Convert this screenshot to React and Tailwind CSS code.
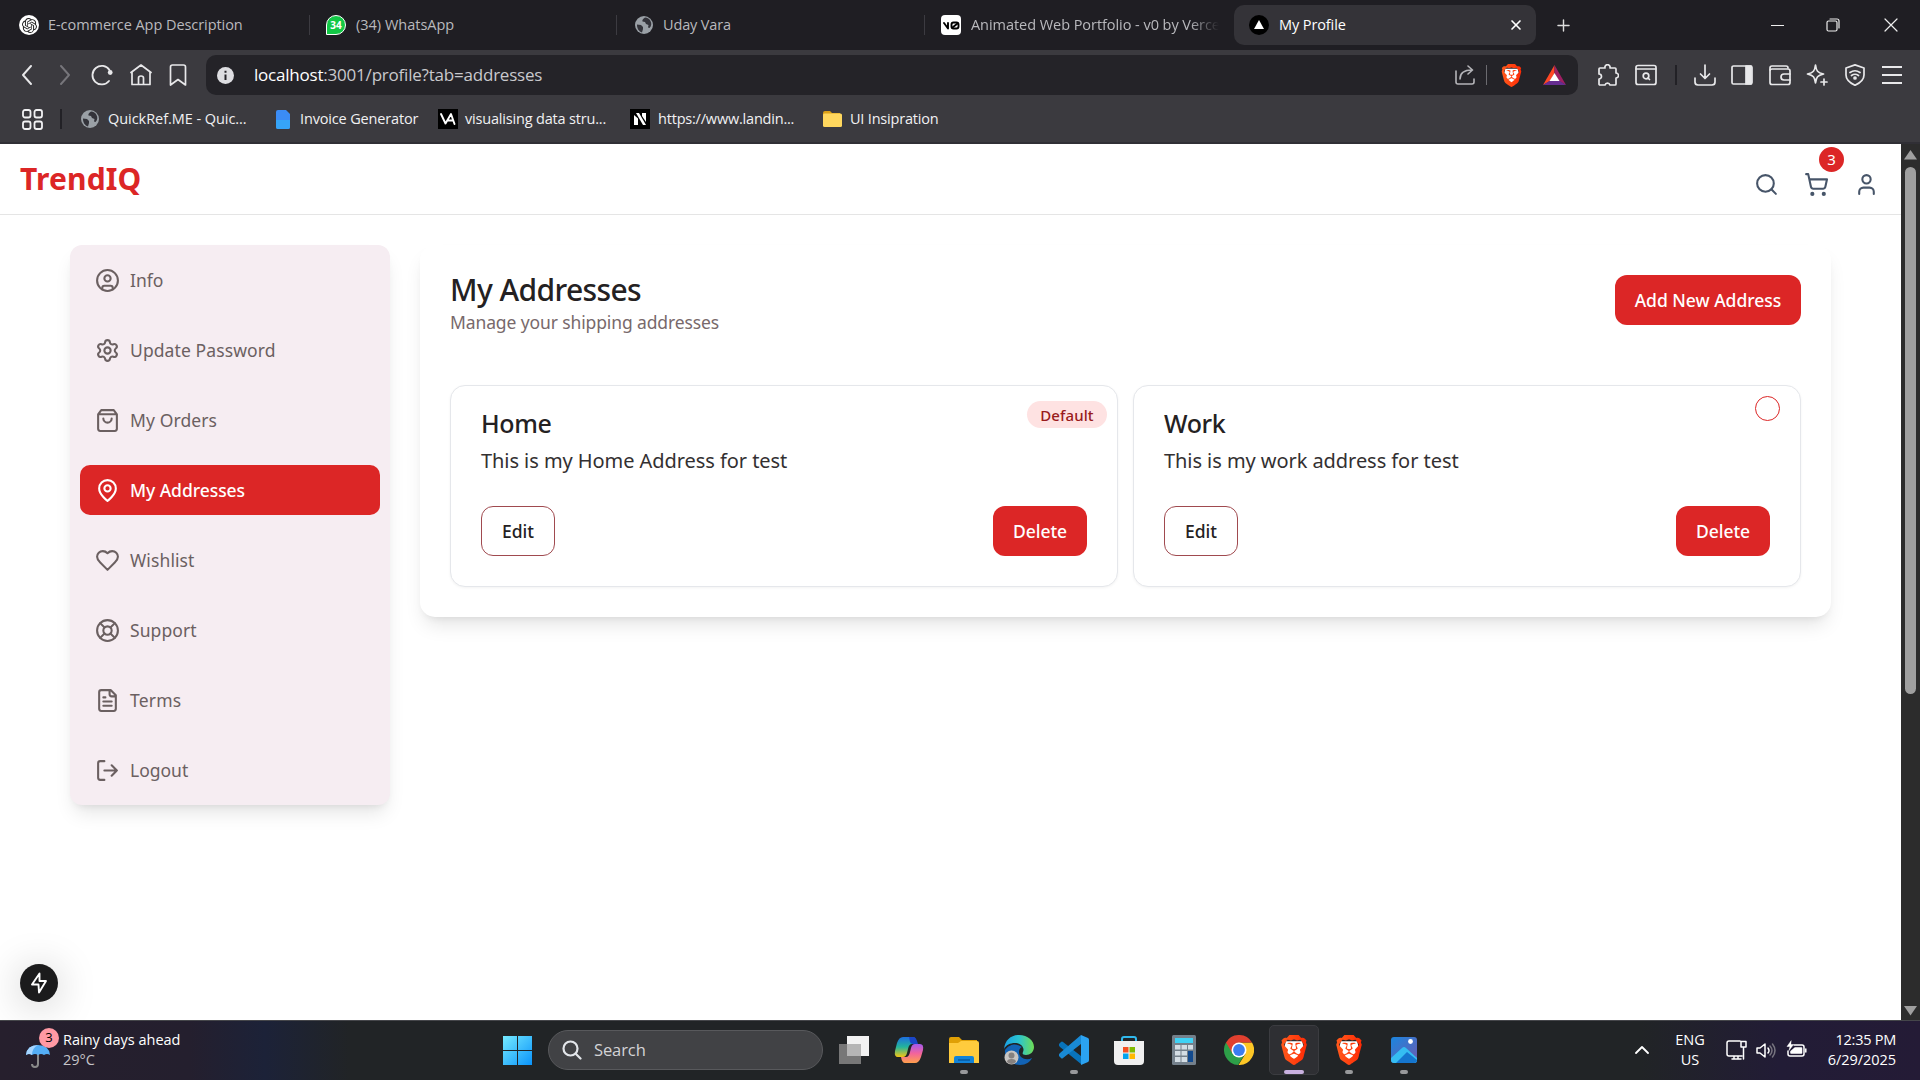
import React from "react";
import { Settings, LifeBuoy, CircleUser, ShoppingCart, Search, User, X, Plus } from "lucide-react";
import { SiBrave, SiOpenai } from "react-icons/si";

const UI = "font-['Open_Sans',sans-serif]";

function Svg({ size = 24, box = 24, w = 2, children, className = "" }) {
  return (
    <svg width={size} height={size} viewBox={`0 0 ${box} ${box}`} fill="none" stroke="currentColor" strokeWidth={w} strokeLinecap="round" strokeLinejoin="round" className={"shrink-0 " + className}>
      {children}
    </svg>
  );
}

function Globe() {
  return (
    <svg width="18" height="18" viewBox="0 0 18 18" className="shrink-0">
      <circle cx="9" cy="9" r="9" fill="#9aa0a6" />
      <path d="M2 8.5 6 9l2 2v2l-1 3.4C4 15.600 1.800 12.500 2 8.500ZM10 1.600C8 3 7 4 7.500 5.500L10 6l1 2 2.500 1-.5 2.500 1.500.5c2-2 2.300-4.500 1-7C14.500 3 12.500 1.800 10 1.600Z" fill="#33333a" />
    </svg>
  );
}

function Brave({ size, id }) {
  return (
    <svg width={size} height={size} viewBox="0 0 24 24" className="shrink-0">
      <defs>
        <linearGradient id={id} x2="1">
          <stop offset="0" stopColor="#ff5a1c" />
          <stop offset="1" stopColor="#ff2a05" />
        </linearGradient>
      </defs>
      <path d="M5.500 5h13l1 4-2 7-5.500 5-5.500-5-2-7Z" fill="#fff" />
      <SiBrave size={24} style={{ fill: `url(#${id})` }} />
    </svg>
  );
}

function TabLabel({ children, className }) {
  return <span className={"whitespace-nowrap text-[14.5px] leading-5 " + className}>{children}</span>;
}

function TabStrip() {
  return (
    <div className="flex h-[50px] items-center bg-[#1f1e23] text-[#b9b9bd]">
      <div className="flex h-5 w-[310px] items-center border-r border-[#3c3b41] pl-[19px]">
        <span className="flex size-5 items-center justify-center rounded-full bg-white text-[#222]"><SiOpenai size={15} /></span>
        <TabLabel className="ml-[9px] tracking-[-0.06px]">E-commerce App Description</TabLabel>
      </div>
      <div className="flex h-5 w-[307px] items-center border-r border-[#3c3b41] pl-4">
        <span className="flex size-5 items-center justify-center rounded-full rounded-bl-none border border-white bg-[#13c846] text-[10px] font-bold text-white">34</span>
        <TabLabel className="ml-[10px]">(34) WhatsApp</TabLabel>
      </div>
      <div className="flex h-5 w-[308px] items-center border-r border-[#3c3b41] pl-[18px]">
        <Globe />
        <TabLabel className="ml-[10px] tracking-[-0.15px]">Uday Vara</TabLabel>
      </div>
      <div className="flex h-5 w-[309px] items-center pl-4">
        <span className="flex size-5 shrink-0 items-center justify-center rounded bg-white text-black">
          <Svg size={17} box={17} w={1.900}><path d="m1 6 4 5.500V6" /><rect x="8.500" y="5.500" width="7" height="6" rx="2" /><path d="m9.500 10.500 5-4" /></Svg>
        </span>
        <div className="ml-[10px] flex w-[248px] overflow-hidden [mask-image:linear-gradient(to_right,black_88%,transparent)]">
          <TabLabel className="tracking-[-0.05px]">Animated Web Portfolio - v0 by Vercel</TabLabel>
        </div>
      </div>
      <div className="flex h-10 w-[302px] items-center rounded-[10px] bg-[#343338] pl-[15px] pr-3 text-white">
        <svg width="20" height="20" viewBox="0 0 20 20"><circle cx="10" cy="10" r="10" fill="#000" /><path d="m10 5 5 9H5Z" fill="#fff" /></svg>
        <TabLabel className="ml-2.5 tracking-[-0.1px]">My Profile</TabLabel>
        <X size={16} strokeWidth={2.500} className="ml-auto" />
      </div>
      <Plus size={19} strokeWidth={1.800} className="ml-[18px] text-[#ddd]" />
      <div className="ml-auto flex h-full text-[#eee]">
        <div className="flex w-[56px] items-center justify-center"><span className="h-px w-[13px] bg-current" /></div>
        <div className="flex w-[56px] items-center justify-center"><Svg size={14} box={14} w={1.200}><rect x="1" y="3" width="10" height="10" rx="1.500" /><path d="M4 1h7q2 0 2 2v7" /></Svg></div>
        <div className="flex w-[59px] items-center justify-center"><Svg size={14} box={14} w={1.200}><path d="m1 1 12 12M13 1 1 13" /></Svg></div>
      </div>
    </div>
  );
}

function Slot({ w, children, className = "" }) {
  return <div style={{ width: w }} className={"flex shrink-0 items-center justify-center " + className}>{children}</div>;
}

function Toolbar() {
  return (
    <div className="flex h-[50px] items-center bg-[#3b3a3f] text-[#e8e8ea]">
      <Slot w={54}><Svg size={20} box={20} w={1.900}><path d="m14 1-8 9 8 9" /></Svg></Slot>
      <Slot w={22} className="text-[#77767b]"><Svg size={20} box={20} w={1.900}><path d="m6 1 8 9-8 9" /></Svg></Slot>
      <Slot w={52}><Svg size={22} box={22} w={1.800}><path d="M18 17a9.300 9.300 0 1 1 .5-11" /><circle cx="19.200" cy="8.500" r="2.400" fill="currentColor" stroke="none" /></Svg></Slot>
      <Slot w={25}><Svg size={22} box={22} w={1.700}><path d="m1 8.500 10-7.500 10 7.500M2 8v12.500h18V8M8.500 20v-6q0-2 2.500-2t2.500 2v6" /></Svg></Slot>
      <Slot w={49}><Svg size={22} box={22} w={1.700}><path d="M3.500 3q0-2 2-2h11q2 0 2 2v18L11 15.500 3.500 21Z" /></Svg></Slot>
      <div className="ml-1 flex h-10 w-[1372px] items-center rounded-[10px] bg-[#242328]">
        <svg width="17" height="17" viewBox="0 0 17 17" className="ml-[11px]"><circle cx="8.500" cy="8.500" r="8.500" fill="#dedee2" /><path d="M8.500 3.800v2M8.500 7.500v5.500" stroke="#242328" strokeWidth="2" /></svg>
        <span className="ml-[20px] whitespace-nowrap text-[17px] leading-6 tracking-[-0.21px] text-[#c9c9cd]"><span className="text-white">localhost</span>:3001/profile?tab=addresses</span>
        <div className="ml-auto flex items-center">
          <Slot w={42} className="text-[#b4b4b8]"><Svg size={20} box={20} w={1.600}><path d="M1 6v11q0 2 2 2h14q2 0 2-2v-3M5 14c0-6 4-9 12-9M13 1l4.500 4-4.500 4" /></Svg></Slot>
          <span className="h-5 w-px bg-[#6c6b70]" />
          <Slot w={48}><Brave size={23} id="bv0" /></Slot>
          <Slot w={38}><svg width="23" height="20" viewBox="0 0 23 20"><path d="M11.500 0 0 20l7-4 4.500-8Z" fill="#ff4724" /><path d="M11.500 0 23 20l-7-4-4.500-8Z" fill="#9e1f63" /><path d="M0 20h23l-7-4.500H7Z" fill="#662d91" /><path d="M11.500 8 16.500 16h-10Z" fill="#fff" /></svg></Slot>
          <span className="w-[5px]" />
        </div>
      </div>
      <Slot w={60}><Svg size={22} box={22} w={1.700}><path d="M2 5q0-1 1-1h5a2.600 2.600 0 1 1 5 0h5q1 0 1 1v4a2.500 2.500 0 1 1 0 5v6q0 1-1 1h-5a2.600 2.600 0 0 0-5 0H3q-1 0-1-1v-5a2.500 2.500 0 1 0 0-5Z" /></Svg></Slot>
      <Slot w={16}><Svg size={22} box={22} w={1.700}><rect x="1" y="1.500" width="20" height="19" rx="2" /><path d="M1 5h20M14.500 15.500l-1.500-1.500" /><circle cx="11" cy="12" r="2.800" /></Svg></Slot>
      <Slot w={43}><span className="h-5 w-[2px] bg-[#222126]" /></Slot>
      <Slot w={16}><Svg size={22} box={22} w={1.700}><path d="M11 1v13M6.500 10l4.500 4.500 4.500-4.500M1 14v4q0 3 3 3h14q3 0 3-3v-4" /></Svg></Slot>
      <Slot w={58}><Svg size={22} box={22} w={1.700}><rect x="1" y="2" width="20" height="18" rx="1.500" /><path d="M15 2h5v18h-5Z" fill="currentColor" /></Svg></Slot>
      <Slot w={18}><Svg size={22} box={22} w={1.700}><rect x="1" y="5" width="20" height="15.500" rx="2" /><path d="M1 6V4q0-2 2-2h14q2 0 2 2M21 10h-6q-3 0-3 3t3 3h6" /></Svg></Slot>
      <Slot w={56}><Svg size={22} box={22} w={1.700}><path d="M9.500 1c.8 6 2 7.500 8 9-6 1.500-7.200 3-8 9-.8-6-2-7.500-8-9 6-1.500 7.200-3 8-9ZM18 15v6M15 18h6" /></Svg></Slot>
      <Slot w={19}><Svg size={22} box={22} w={1.700}><path d="M11 .9 20 4v7c0 5-4 8-9 10.300C6 19 2 16 2 11V4ZM6 8.500q5-3.500 10 0M7.500 11.500q3.500-2.500 7 0" /><circle cx="11" cy="14" r="1" fill="currentColor" /></Svg></Slot>
      <Slot w={56}><Svg size={20} box={20} w={1.900}><path d="M0 2h20M0 10h20M0 18h20" /></Svg></Slot>
    </div>
  );
}

function Mark({ icon, label, className, text }) {
  return (
    <div className={"flex shrink-0 items-center " + className}>
      {icon}
      <span className={"whitespace-nowrap text-[14.500px] leading-5 " + text}>{label}</span>
    </div>
  );
}

function Bookmarks() {
  return (
    <div className="flex h-[44px] items-center border-b-2 border-[#302f35] bg-[#3b3a3f] pb-1 pl-[22px] text-[#f1f1f3]">
      <Svg size={21} box={21} w={1.800}><rect x="1" y="1" width="7.500" height="7.500" rx="2" /><rect x="12.500" y="1" width="7.500" height="7.500" rx="2" /><rect x="1" y="12.500" width="7.500" height="7.500" rx="2" /><rect x="12.500" y="12.500" width="7.500" height="7.500" rx="2" /></Svg>
      <span className="ml-[17px] h-5 w-[2px] bg-[#222126]" />
      <Mark className="ml-[19px] w-[195px]" icon={<Globe />} text="ml-[9px] tracking-[-0.05px]" label="QuickRef.ME - Quic..." />
      <Mark className="w-[162px]" text="ml-[10px] tracking-[-0.15px]" label="Invoice Generator" icon={<svg width="14" height="19" viewBox="0 0 14 19"><path d="M2 0h8l4 4v13q0 2-2 2H2q-2 0-2-2V2q0-2 2-2Z" fill="#3b8cf6" /><path d="M0 10h14v7q0 2-2 2H2q-2 0-2-2Z" fill="#36a4f7" /></svg>} />
      <Mark className="w-[192px]" text="ml-[7px] tracking-[-0.18px]" label="visualising data stru..." icon={<span className="flex size-5 items-center justify-center bg-black"><Svg size={16} box={16} w={1.900} className="text-white"><path d="m1 3 4.500 9.500L11 3l3.500 10M8 9.500h5" /></Svg></span>} />
      <Mark className="w-[193px]" text="ml-[8px] tracking-[-0.2px]" label="https://www.landin..." icon={<svg width="20" height="20" viewBox="0 0 20 20"><path d="M0 0h20v20H0Z" fill="#000" /><path d="M4 16V6l4 3.500V16ZM6 4h3l7 12h-3ZM12 4h4v9l-4-6Z" fill="#fff" /></svg>} />
      <Mark text="ml-[8px] tracking-[-0.2px]" label="UI Insipration" icon={<svg width="19" height="16" viewBox="0 0 19 16"><path d="M0 2q0-2 2-2h5l2 2h8v5H0Z" fill="#dba017" /><rect y="2.500" width="19" height="13.500" rx="1.500" fill="#ffd75e" /></svg>} />
    </div>
  );
}

const MENU = [
  ["Info", "", <CircleUser size={25} />],
  ["Update Password", "tracking-[0.1px]", <Settings size={25} />],
  ["My Orders", "tracking-[0.1px]", <Svg size={25}><path d="M6 2 3 6v14a2 2 0 0 0 2 2h14a2 2 0 0 0 2-2V6l-3-4ZM3 6h18M16 10a4 4 0 0 1-8 0" /></Svg>],
  ["My Addresses", "tracking-[-0.05px]", <Svg size={25}><path d="M20 10c0 6-8 12-8 12s-8-6-8-12a8 8 0 0 1 16 0Z" /><circle cx="12" cy="10" r="3" /></Svg>],
  ["Wishlist", "tracking-[0.1px]", <Svg size={25}><path d="M19 14c1.490-1.460 3-3.210 3-5.500A5.500 5.500 0 0 0 16.500 3c-1.760 0-3 .5-4.500 2-1.500-1.500-2.740-2-4.500-2A5.500 5.500 0 0 0 2 8.500c0 2.300 1.500 4.050 3 5.500l7 7Z" /></Svg>],
  ["Support", "tracking-[0.1px]", <LifeBuoy size={25} />],
  ["Terms", "tracking-[0.2px]", <Svg size={25}><path d="M15 2H6a2 2 0 0 0-2 2v16a2 2 0 0 0 2 2h12a2 2 0 0 0 2-2V7ZM14 2v4a2 2 0 0 0 2 2h4M10 9H8M16 13H8M16 17H8" /></Svg>],
  ["Logout", "", <Svg size={25}><path d="M9 21H5a2 2 0 0 1-2-2V5a2 2 0 0 1 2-2h4M16 17l5-5-5-5M21 12H9" /></Svg>],
];

function Sidebar() {
  return (
    <nav className="flex w-[320px] shrink-0 flex-col gap-5 rounded-[12px] bg-[#f6edf2] p-[10px] shadow-[0_12px_19px_-4px_rgba(0,0,0,0.1),0_5px_8px_-5px_rgba(0,0,0,0.1)]">
      {MENU.map(([label, spacing, icon]) => {
        const active = label === "My Addresses";
        return (
          <a key={label} className={"flex h-[50px] items-center gap-[10px] rounded-[10px] px-[15px] text-[17.5px] " + (active ? "bg-[#dc2626] font-medium text-white" : "text-[#6b6061]")}>
            {icon}
            <span className={spacing}>{label}</span>
          </a>
        );
      })}
    </nav>
  );
}

function AddressCard({ title, text, isDefault }) {
  return (
    <article className="relative h-[202px] flex-1 rounded-[15px] border border-[#e5e7eb] bg-white px-[30px] shadow-[0_1px_3px_rgba(0,0,0,0.05)]">
      {isDefault ? (
        <span className="absolute right-[10px] top-[15px] flex h-[27px] w-[80px] items-center justify-center rounded-full bg-[#fee2e2] pt-px text-[15px] font-medium tracking-[0.1px] text-[#991b1b]">Default</span>
      ) : (
        <span className="absolute right-[20px] top-[10px] size-[25px] rounded-full border border-[#dc2626]" />
      )}
      <h3 className="mt-5 text-[25px] font-medium leading-[35px] tracking-[-0.4px] text-[#242122]">{title}</h3>
      <p className="mt-[5px] text-[20px] leading-[30px] tracking-[-0.06px] text-[#333031]">{text}</p>
      <div className="mt-[30px] flex justify-between text-[17.5px] font-medium">
        <button className="h-[50px] w-[74px] rounded-[12px] border border-[#a04a4f] text-[#242122]">Edit</button>
        <button className="h-[50px] w-[94px] rounded-[12px] bg-[#dc2626] tracking-[-0.05px] text-white">Delete</button>
      </div>
    </article>
  );
}

function Page() {
  return (
    <div className="flex h-[876px]">
      <div className="relative flex w-[1901px] flex-col overflow-hidden bg-white font-['Noto_Sans',sans-serif]">
        <header className="flex h-[71px] shrink-0 items-center justify-between border-b border-[#e5e5e5] pl-5 pr-[22px]">
          <h1 className="text-[30px] font-bold leading-9 tracking-[0.15px] text-[#dc2626]">TrendIQ</h1>
          <div className="mt-[10px] flex gap-[25px] text-[#475569]">
            <Search size={25} />
            <div className="relative">
              <ShoppingCart size={25} />
              <span className="absolute -top-[25px] left-[15px] flex size-[25px] items-center justify-center rounded-full bg-[#dc2626] text-[15px] leading-none text-white">3</span>
            </div>
            <User size={25} />
          </div>
        </header>
        <div className="flex items-start gap-[30px] pl-[70px] pr-[70px] pt-[30px]">
          <Sidebar />
          <main className="h-[372px] flex-1 rounded-[15px] bg-white px-[30px] pt-[30px] shadow-[0_12px_19px_-4px_rgba(0,0,0,0.1),0_5px_8px_-5px_rgba(0,0,0,0.1)]">
            <div className="flex h-[110px] items-start justify-between">
              <div>
                <h2 className="text-[30px] font-medium leading-[30px] tracking-[-0.6px] text-[#242122]">My Addresses</h2>
                <p className="mt-[5px] text-[17.5px] leading-[25px] tracking-[-0.12px] text-[#78696b]">Manage your shipping addresses</p>
              </div>
              <button className="h-[50px] w-[186px] whitespace-nowrap rounded-[12px] bg-[#dc2626] text-[17.5px] font-medium tracking-[-0.02px] text-white">Add New Address</button>
            </div>
            <div className="flex gap-[15px]">
              <AddressCard title="Home" text="This is my Home Address for test" isDefault />
              <AddressCard title="Work" text="This is my work address for test" />
            </div>
          </main>
        </div>
        <button className="absolute bottom-[18px] left-5 flex size-[38px] items-center justify-center rounded-full bg-[#1b1b1c] text-white shadow-[0_4px_40px_rgba(0,0,0,0.22)]">
          <Svg size={22} box={22} w={1.900}><path d="M11.500 1.500 4 12.500h6.500l.5 8 7-11.500h-6.500Z" /></Svg>
        </button>
      </div>
      <div className="flex w-[19px] flex-col items-center bg-[#2c2c2c] pb-1 pt-[6px]">
        <svg width="13" height="10"><path d="M6.500 0 13 9.500H0Z" fill="#9f9f9f" /></svg>
        <span className="mt-[7px] h-[527px] w-[11px] rounded-full bg-[#9f9f9f]" />
        <svg width="13" height="10" className="mt-auto"><path d="M0 0h13L6.500 9.500Z" fill="#9f9f9f" /></svg>
      </div>
    </div>
  );
}

function TaskIcon({ children, dot, active }) {
  return (
    <div className={"relative mx-[2.5px] flex size-[50px] items-center justify-center rounded-[5px] " + (active ? "border border-[#3b3c40] bg-[#2e2f33]" : "")}>
      {children}
      {dot && <span className={"absolute h-1 rounded-full " + (active ? "bottom-0 w-5 bg-[#c9b1e0]" : "bottom-px w-2 bg-[#98999b]")} />}
    </div>
  );
}

function Taskbar() {
  return (
    <div className="flex h-[60px] items-center border-t border-[#45464a] bg-[linear-gradient(90deg,#261f2d_0px,#241f2e_190px,#1c2238_265px,#212426_350px,#212426_1640px,#221c36_1780px,#241b36_1920px)] pb-px text-white">
      <div className="flex w-[501px] items-center pl-[26px]">
        <div className="relative">
          <svg width="25" height="40" viewBox="0 0 25 40"><path d="M12 24v10q0 3-3 3t-3-3" fill="none" stroke="#8a8a8a" strokeWidth="2" /><path d="M0 25q1-10 12-10t12 10q-3-2-6 0-3-2-6 0-3-2-6 0-3-2-6 0Z" fill="#54aef6" /><path d="M0 25q1-10 12-10-6 3-6 10-3-2-6 0Z" fill="#a6d5ff" /></svg>
          <span className="absolute -top-[2px] left-[13px] flex size-5 items-center justify-center rounded-full bg-[#ff99a4] text-[13px] text-black">3</span>
        </div>
        <div className="ml-[12px] text-[14.500px] leading-5">
          <div>Rainy days ahead</div>
          <div className="text-[#c5c4c8]">29°C</div>
        </div>
      </div>
      <svg width="32" height="32" viewBox="0 0 32 32"><defs><linearGradient id="win" x2="1" y2="1"><stop stopColor="#75eaff" /><stop offset="1" stopColor="#0a93fa" /></linearGradient></defs><path d="M2 2h14v14H2ZM17 2h14v14H17ZM2 17h14v14H2ZM17 17h14v14H17Z" fill="url(#win)" /></svg>
      <div className="ml-[15px] flex h-10 w-[275px] items-center rounded-full border border-[#58595c] bg-[#414245] pl-[13px]">
        <Svg size={20} box={20} w={2.200} className="text-[#e3e6ea]"><circle cx="8.500" cy="8.500" r="7" /><path d="m13.500 13.500 5 5" /></Svg>
        <span className="ml-[12px] text-[16.500px] leading-6 tracking-[-0.1px] text-[#d3d3d5]">Search</span>
      </div>
      <div className="ml-[3.5px] flex">
        <TaskIcon><svg width="30" height="28" viewBox="0 0 30 28"><path d="M8 0h22v20H8Z" fill="#f2f2f2" /><path d="M0 8h22v20H0Z" fill="#777" /><path d="M8 8h14v12H8Z" fill="#b5b5b5" /></svg></TaskIcon>
        <TaskIcon><svg width="30" height="28" viewBox="0 0 30 28"><defs><linearGradient id="cpa" y2="1" x2="0"><stop stopColor="#1d6ee0" /><stop offset=".5" stopColor="#23b59b" /><stop offset="1" stopColor="#f6c512" /></linearGradient><linearGradient id="cpb" y2="1" x2="0"><stop stopColor="#a458ee" /><stop offset=".5" stopColor="#f3649b" /><stop offset="1" stopColor="#ffa04c" /></linearGradient></defs><path d="M14 1h5q3 0 4 7h-5q-3 0-4 5l-1 4q-1 4-4 4H4q-4 0-3-6l2-8q2-6 6-6Z" fill="url(#cpa)" /><path d="M15 1h5q2 0 4 7h-5q-2 0-3-2Z" fill="#1b46c8" /><path d="M16 27h-5q-3 0-4-6h5q3 0 4-5l1-4q1-4 4-4h5q4 0 3 6l-2 7q-2 6-6 6Z" fill="url(#cpb)" /></svg></TaskIcon>
        <TaskIcon dot><svg width="30" height="26" viewBox="0 0 30 26"><path d="M0 2q0-2 2-2h8l3 3h15v8H0Z" fill="#e0a005" /><path d="M0 6h9l3-2h16q2 0 2 2v20H0Z" fill="#ffcb3d" /><path d="M5 26v-5q0-2 2-2h16q2 0 2 2v5Z" fill="#1283d8" /><path d="M9 23h12" stroke="#075aa0" strokeWidth="1.500" /></svg></TaskIcon>
        <TaskIcon><svg width="30" height="30" viewBox="0 0 30 30"><defs><linearGradient id="edg" x2="1"><stop stopColor="#1aa0e5" /><stop offset=".5" stopColor="#2bc4cf" /><stop offset="1" stopColor="#6fdd55" /></linearGradient></defs><path d="M1 15C0 22 6 30 16 30c6 0 10-3 12-7-6 3-13 0-13-6 0-4 3-5 3-5S9 5 1 15Z" fill="#1263b5" /><path d="M0 14C1 5 7 0 15 0c9 0 15 6 15 12 0 5-4 8-8 8-3 0-4-1-3-3 2-4-2-9-8-9C6 8 2 10 0 14Z" fill="url(#edg)" /><circle cx="7.500" cy="22.500" r="7" fill="#c8c5c2" /><circle cx="7.500" cy="20.500" r="3" fill="#85817f" /><path d="M3 27q0-3 4.500-3t4.500 3q-4.500 4-9 0Z" fill="#85817f" /></svg></TaskIcon>
        <TaskIcon dot><svg width="30" height="30" viewBox="0 0 30 30"><path d="m0 9 2-2q1-1 2 0l18 14v8L1 12Q-1 10 0 9Z" fill="#0873bb" /><path d="m0 21 2 2q1 1 2 0L22 9V0L1 18q-2 2-1 3Z" fill="#198ad5" /><path d="m22 0 7 3q1 .5 1 2v20q0 1.500-1 2l-7 3Z" fill="#2ba3f2" /></svg></TaskIcon>
        <TaskIcon><svg width="30" height="30" viewBox="0 0 30 30"><path d="M8 7V4q0-2 2-2h10q2 0 2 2v3" fill="none" stroke="#30b9ed" strokeWidth="2" /><path d="M0 6h30v20q0 4-4 4H4q-4 0-4-4Z" fill="#f0f0f0" /><path d="M9 12h5.500v5.500H9Z" fill="#f25022" /><path d="M15.500 12H21v5.500h-5.500Z" fill="#7fba00" /><path d="M9 18.500h5.500V24H9Z" fill="#00a4ef" /><path d="M15.500 18.500H21V24h-5.500Z" fill="#ffb900" /></svg></TaskIcon>
        <TaskIcon><svg width="24" height="30" viewBox="0 0 24 30"><rect width="24" height="30" rx="1.500" fill="#74808b" /><path d="M3 3h18v5H3Z" fill="#3fd2f5" /><path d="M3 10h5.500v4.500H3ZM9.500 10H15v4.500H9.500ZM16 10h5v4.500h-5ZM3 16h5.500v4.500H3ZM9.500 16H15v4.500H9.500ZM3 22h5.500v5H3ZM9.500 22H15v5H9.500Z" fill="#d4dde4" /><path d="M16 16h5v11h-5Z" fill="#124a8e" /></svg></TaskIcon>
        <TaskIcon><svg width="30" height="30" viewBox="0 0 30 30"><path d="M15 15 2 7.500A15 15 0 0 0 14 30l7-11Z" fill="#2d9f48" /><path d="M15 15l6.500 3.700L14.500 30A15 15 0 0 0 28 7.500H15Z" fill="#fdc726" /><path d="M15 15 8.500 18.500 2 7.500a15 15 0 0 1 26 0H15Z" fill="#e0402f" /><circle cx="15" cy="15" r="7.500" fill="#fff" /><circle cx="15" cy="15" r="5.900" fill="#3b7df0" /></svg></TaskIcon>
        <TaskIcon dot active><Brave size={30} id="bv1" /></TaskIcon>
        <TaskIcon dot><Brave size={30} id="bv2" /></TaskIcon>
        <TaskIcon dot><svg width="26" height="26" viewBox="0 0 26 26"><defs><linearGradient id="pho" x2="1" y2="1"><stop stopColor="#1a86df" /><stop offset="1" stopColor="#6d5bb0" /></linearGradient></defs><rect width="26" height="26" rx="3" fill="url(#pho)" /><path d="m0 21 11-10q2-2 4 0l11 10v2q0 3-3 3H3q-3 0-3-3Z" fill="#35bdf2" /><path d="m5 26 11-11 10 8q0 3-3 3Z" fill="#1576cf" /><circle cx="19.500" cy="4.500" r="2.400" fill="#fff" /></svg></TaskIcon>
      </div>
      <div className="ml-auto flex items-center pr-[24px]">
        <Svg size={14} box={14} w={1.800}><path d="m1 10 6-6 6 6" /></Svg>
        <div className="ml-[24px] w-[34px] text-center text-[14.500px] leading-5">ENG<br />US</div>
        <Svg size={21} box={21} w={1.500} className="ml-[19px]"><path d="M14 1H3Q1 1 1 3v11q0 2 2 2h13M6 19h9M8 16v3M12 16v3M15 1.500h5V7h-5ZM17.500 7v12" /></Svg>
        <Svg size={21} box={21} w={1.500} className="ml-[9px]"><path d="M1 8h3l5-4v13l-5-4H1ZM12 8q2 2.500 0 5" /><path d="M14 6q4 4.500 0 9M16.500 4q5 6.500 0 13" stroke="#77747f" /></Svg>
        <Svg size={21} box={21} w={1.500} className="ml-[9px]"><path d="M8 5h8q2 0 2 2v7q0 2-2 2H4q-2 0-2-2v-3" /><path d="M9 8h6.500v5H5v-1.500Z" fill="currentColor" /><path d="M19.800 9v3" /><path d="M5 1 1 6.500h3l-1 4 4.500-6H5Z" fill="currentColor" strokeWidth=".5" /></Svg>
        <div className="ml-[15px] w-[74px] whitespace-nowrap text-right text-[14.500px] leading-5"><div className="tracking-[-0.25px]">12:35 PM</div><div className="tracking-[-0.05px]">6/29/2025</div></div>
      </div>
    </div>
  );
}

export default function App() {
  return (
    <div className={"flex h-[1080px] w-[1920px] flex-col overflow-hidden " + UI}>
      <TabStrip />
      <Toolbar />
      <Bookmarks />
      <Page />
      <Taskbar />
    </div>
  );
}
